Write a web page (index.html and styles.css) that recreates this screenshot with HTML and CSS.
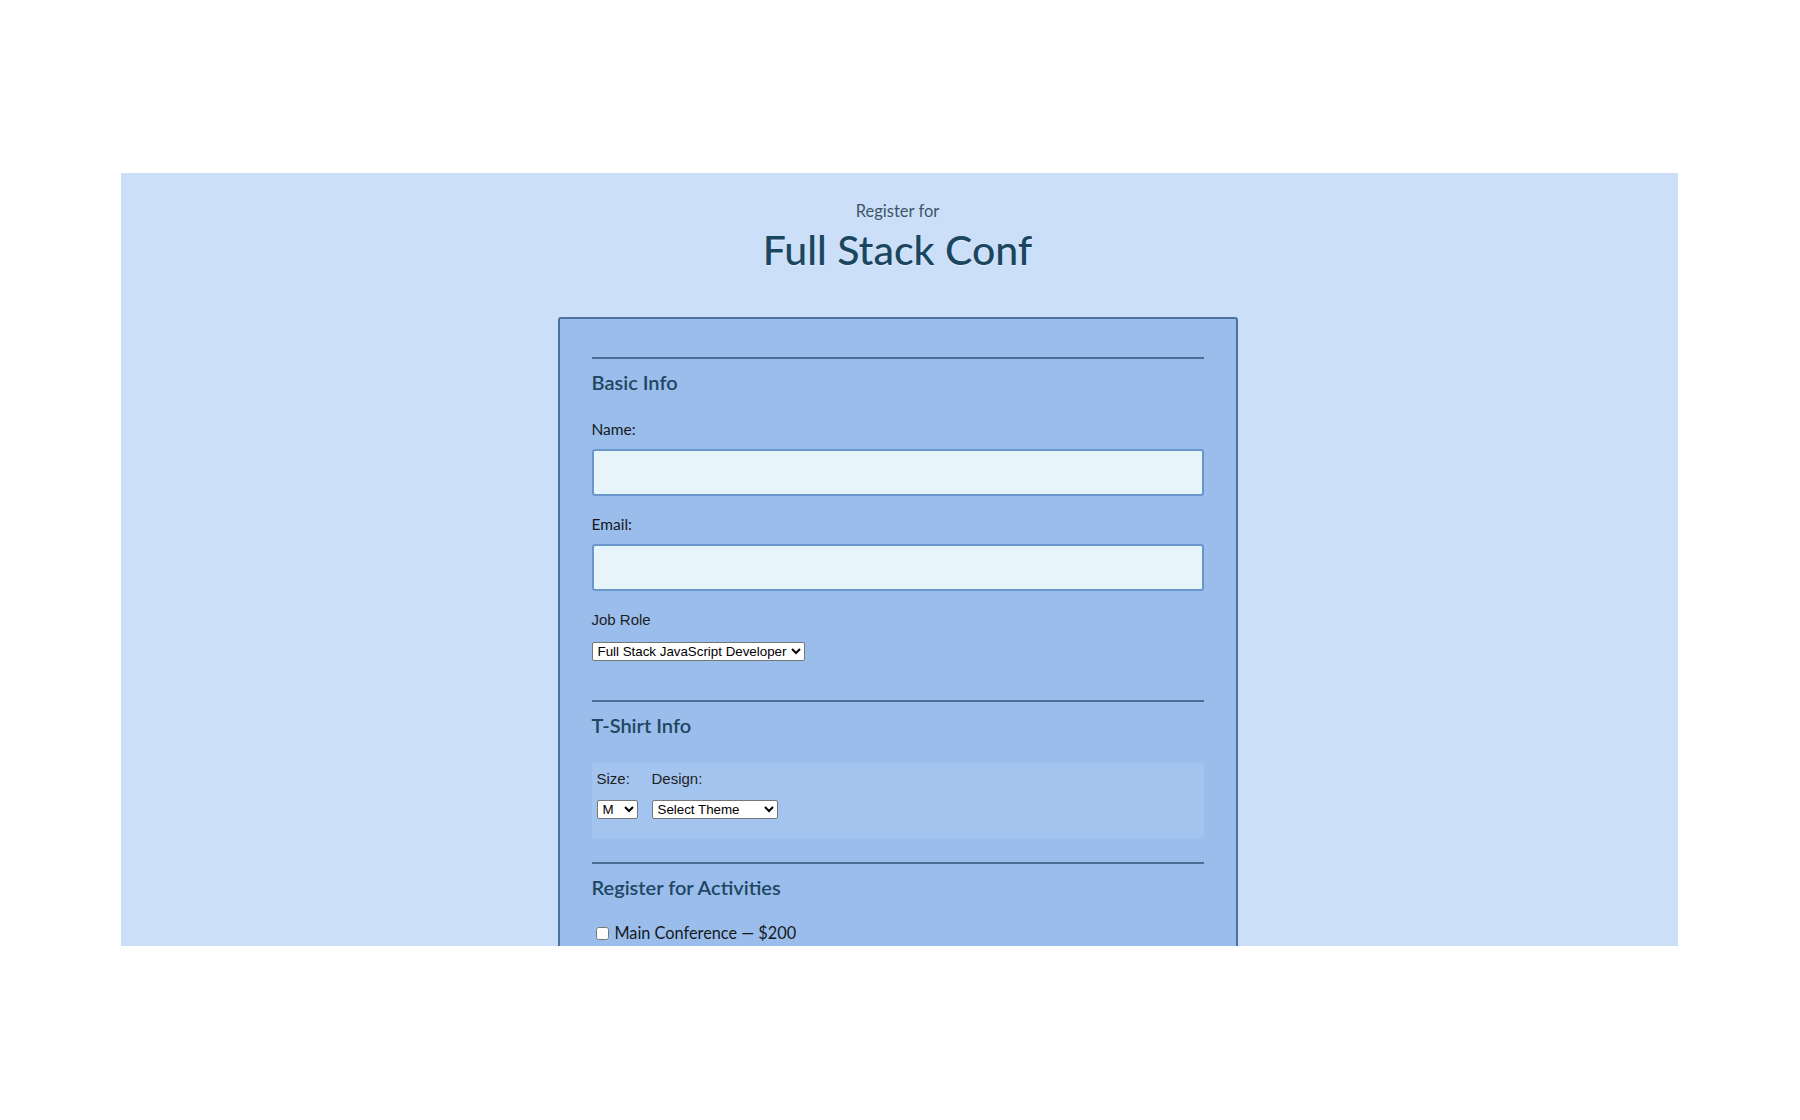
FILE: index.html
```html
<!DOCTYPE html>
<html lang="en">
<head>
<meta charset="utf-8">
<title>Full Stack Conf</title>
<link rel="stylesheet" href="styles.css">
</head>
<body>
<div class="panel">
  <header class="header">
    <p class="eyebrow">Register for</p>
    <h1 class="title">Full Stack Conf</h1>
  </header>
  <form class="form-box">
    <section class="section">
      <hr class="rule">
      <h2 class="section-title">Basic Info</h2>
      <label class="field-label" for="name">Name:</label>
      <input class="text-input" id="name" type="text">
      <label class="field-label" for="email">Email:</label>
      <input class="text-input" id="email" type="email">
      <label class="plain-label" for="title">Job Role</label>
      <select class="native-select role" id="title">
        <option>Full Stack JavaScript Developer</option>
      </select>
    </section>
    <section class="section section-tshirt">
      <hr class="rule">
      <h2 class="section-title">T-Shirt Info</h2>
      <div class="shirt-box">
        <div class="shirt-col">
          <label class="plain-label small" for="size">Size:</label>
          <select class="native-select size" id="size"><option>M</option><option>S</option><option>L</option></select>
        </div>
        <div class="shirt-col">
          <label class="plain-label small" for="design">Design:</label>
          <select class="native-select theme" id="design"><option>Select Theme</option></select>
        </div>
      </div>
    </section>
    <section class="section section-activities">
      <hr class="rule">
      <h2 class="section-title">Register for Activities</h2>
      <label class="activity"><input type="checkbox" class="check"> Main Conference — $200</label>
    </section>
  </form>
</div>
</body>
</html>
```

FILE: styles.css
```css
html, body {
  margin: 0;
  padding: 0;
  background: #ffffff;
}

body {
  font-family: "Lato", "Liberation Sans", sans-serif;
  padding-top: 173px;
}

.panel {
  box-sizing: border-box;
  width: 1557px;
  height: 773px;
  margin-left: 121px;
  padding-right: 4px;
  background: #cbdff9;
  overflow: hidden;
  display: flex;
  flex-direction: column;
  align-items: center;
}

.header {
  text-align: center;
  padding-top: 28px;
}

.eyebrow {
  margin: 0;
  font-size: 16.5px;
  line-height: 20px;
  color: #3e5568;
}

.title {
  margin: 4px 0 0;
  font-size: 41px;
  line-height: 50px;
  font-weight: 500;
  color: #1b4660;
  text-shadow: 0 1px 1px rgba(255,255,255,0.5);
}

.form-box {
  margin-top: 42px;
  width: 612px;
  flex-shrink: 0;
  padding: 38px 32px 40px;
  background: #9bbdec;
  border: 2px solid #4a73a0;
  border-radius: 3px;
  min-height: 700px;
}

.section {
  display: flex;
  flex-direction: column;
  align-items: flex-start;
}

.rule {
  width: 100%;
  margin: 0;
  border: none;
  height: 2px;
  background: #4a6f96;
}

.section-title {
  margin: 10px 0 0;
  font-size: 20px;
  line-height: 26px;
  font-weight: 600;
  color: #1d4762;
}

.field-label {
  margin-top: 24px;
  font-size: 15.5px;
  line-height: 20px;
  color: #151a22;
}

.text-input {
  box-sizing: border-box;
  width: 100%;
  height: 47px;
  margin: 10px 0 0;
  background: #e8f4fb;
  border: 2px solid #6b96cc;
  border-radius: 3px;
}

.text-input + .field-label {
  margin-top: 18px;
}

.plain-label {
  margin-top: 19px;
  font-family: "Liberation Sans", Arial, sans-serif;
  font-size: 15px;
  line-height: 20px;
  color: #1c1f24;
}

.native-select {
  margin-top: 12px;
  font-family: "Liberation Sans", Arial, sans-serif;
  font-size: 13.33px;
  height: 19px;
  padding: 0 0 0 1px;
  border: 1px solid #767676;
  border-radius: 2px;
  background: #ffffff;
  color: #000;
}

.native-select.role {
  width: 213px;
}

.section-tshirt {
  margin-top: 39px;
}

.shirt-box {
  margin-top: 25px;
  box-sizing: border-box;
  width: 100%;
  height: 76px;
  background: #a3c4ef;
  border-radius: 3px;
  padding: 6px 5px;
  display: flex;
  gap: 14px;
}

.shirt-col {
  display: flex;
  flex-direction: column;
  align-items: flex-start;
}

.plain-label.small {
  margin-top: 0;
}

.shirt-col .native-select {
  margin-top: 11px;
}

.native-select.theme {
  width: 126px;
}

.native-select.size {
  width: 41px;
}

.section-activities {
  margin-top: 23px;
}

.activity {
  margin-top: 23px;
  display: flex;
  align-items: center;
  gap: 6px;
  font-size: 16.3px;
  line-height: 20px;
  color: #151a22;
  padding-left: 4px;
}

.check {
  margin: 0;
  width: 13px;
  height: 13px;
}
```
